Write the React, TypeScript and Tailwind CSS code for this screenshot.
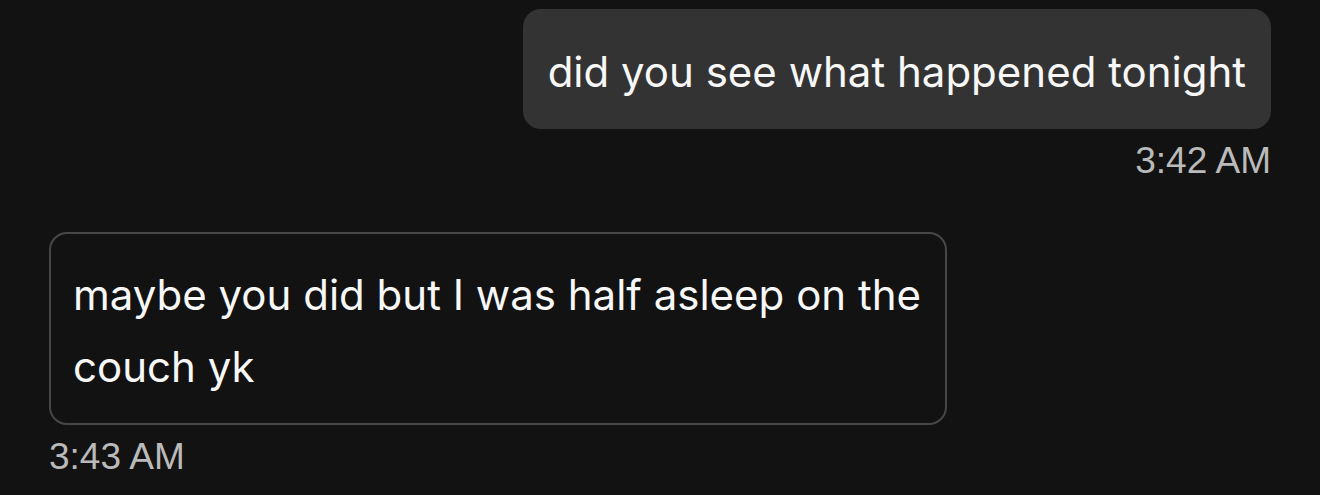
import React from 'react';

interface Message {
  text: string;
  time: string;
  mine: boolean;
}

// placeholder copy, same length and wrap as the original bubbles
const messages: Message[] = [
  { text: 'did you see what happened tonight', time: '3:42 AM', mine: true },
  { text: 'maybe you did but I was half asleep on the couch yk', time: '3:43 AM', mine: false },
];

const Bubble: React.FC<{ msg: Message }> = ({ msg }) => (
  <div className={msg.mine ? 'flex flex-col items-end' : 'flex flex-col items-start'}>
    <div
      className={
        msg.mine
          ? "max-w-[898px] rounded-[18px] bg-[#333333] px-[25px] pt-[27px] pb-[21px] font-['Inter',sans-serif] text-[42px] leading-[72px] text-[#f7f7f7]"
          : "max-w-[898px] rounded-[18px] border-2 border-[#474747] px-[22px] pt-[25px] pb-[20px] font-['Inter',sans-serif] text-[42px] leading-[72px] text-[#f7f7f7]"
      }
    >
      {msg.text}
    </div>
    <div className="mt-[11px] font-['Liberation_Sans',Arial,sans-serif] text-[37px] leading-[42px] text-[#bababa]">
      {msg.time}
    </div>
  </div>
);

export default function App() {
  return (
    <div className="min-h-screen bg-[#121212] px-[49px] pt-[9px]">
      <div className="flex flex-col gap-[50px]">
        {messages.map((m, i) => (
          <Bubble key={i} msg={m} />
        ))}
      </div>
    </div>
  );
}
